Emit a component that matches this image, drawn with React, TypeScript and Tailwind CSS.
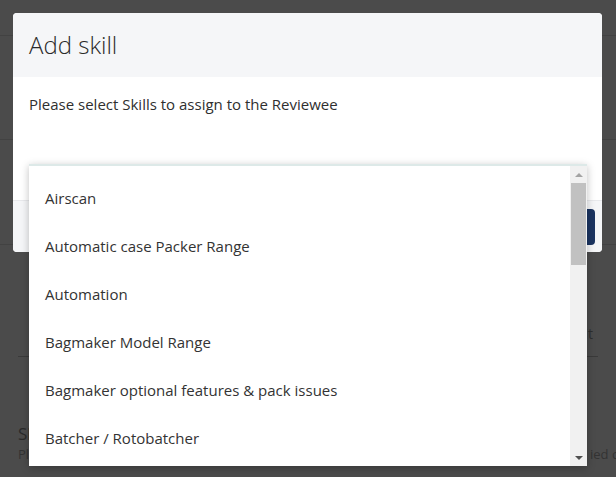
const skills = [
  "Airscan",
  "Automatic case Packer Range",
  "Automation",
  "Bagmaker Model Range",
  "Bagmaker optional features & pack issues",
  "Batcher / Rotobatcher",
];

const font = { fontFamily: '"Open Sans", "Noto Sans", sans-serif' };

export default function App() {
  return (
    <div
      className="relative h-[477px] w-[616px] overflow-hidden bg-[#4b4b4b] text-[#2b2b2b]"
      style={font}
    >
      {/* dimmed page behind the modal */}
      <div className="flex h-full flex-col">
        <div className="h-[36px] border-b border-[#424242]" />
        <div className="h-[104px] border-b border-[#424242]" />
        <div className="h-[105px] border-b border-[#424242]" />
        <div className="mx-[18px] flex h-[112px] items-end justify-end border-b border-[#3a3a3a] pb-[12px] pr-[5px]">
          <span className="text-[14px] text-[#2e2e2e]">Edit</span>
        </div>
        <div className="pl-[18px] pt-[66px]">
          <div className="text-[17px] font-medium leading-[22px] text-[#2a2a2a]">
            Skills
          </div>
          <div className="grid grid-cols-[572px_1fr] text-[13px] leading-[18px] text-[#333]">
            <span className="overflow-hidden whitespace-nowrap">
              Please add the skills this reviewee will be
            </span>
            <span className="overflow-hidden whitespace-nowrap">ied c</span>
          </div>
        </div>
      </div>

      {/* modal */}
      <div className="absolute left-[13px] top-[13px] flex h-[239px] w-[589px] flex-col overflow-hidden rounded-[4px] bg-white">
        <div className="flex h-[64px] items-center bg-[#f5f6f8] px-4">
          <h2 className="text-[24px] font-light text-[#2a2a2a]">Add skill</h2>
        </div>
        <div className="flex h-[123px] flex-col px-4 pt-[17px]">
          <p className="text-[15px] leading-[20px] text-[#2f2f2f]">
            Please select Skills to assign to the Reviewee
          </p>
          <div className="mt-auto flex h-[36px] items-center justify-end pr-[6px]">
            <span className="h-0 w-0 border-x-[4px] border-b-[5px] border-x-transparent border-b-[#1c3660]" />
          </div>
        </div>
        <div className="flex flex-1 items-center justify-end border-t border-[#e8e9ec] bg-[#f5f6f8] px-[7px]">
          <button className="h-[36px] w-[80px] rounded-[4px] bg-[#1b3461] text-[13px] text-white">
            Add
          </button>
        </div>
      </div>

      {/* open dropdown */}
      <div className="absolute left-[29px] top-[164px] flex h-[302px] w-[558px] border-t-2 border-[#dde9e8] bg-white shadow-[0_2px_8px_rgba(0,0,0,0.25)]">
        <ul className="flex-1 pt-[8px]">
          {skills.map((s) => (
            <li
              key={s}
              className="flex h-[48px] items-center px-4 text-[15px] text-[#333]"
            >
              {s}
            </li>
          ))}
        </ul>
        <div className="flex w-[17px] flex-col items-center bg-[#f1f1f1]">
          <div className="flex h-[17px] items-center justify-center">
            <span className="h-0 w-0 border-x-[4px] border-b-[4px] border-x-transparent border-b-[#a3a3a3]" />
          </div>
          <div className="h-[82px] w-[15px] bg-[#c1c1c1]" />
          <div className="mt-auto flex h-[17px] items-center justify-center">
            <span className="h-0 w-0 border-x-[4px] border-t-[4px] border-x-transparent border-t-[#505050]" />
          </div>
        </div>
      </div>
    </div>
  );
}
